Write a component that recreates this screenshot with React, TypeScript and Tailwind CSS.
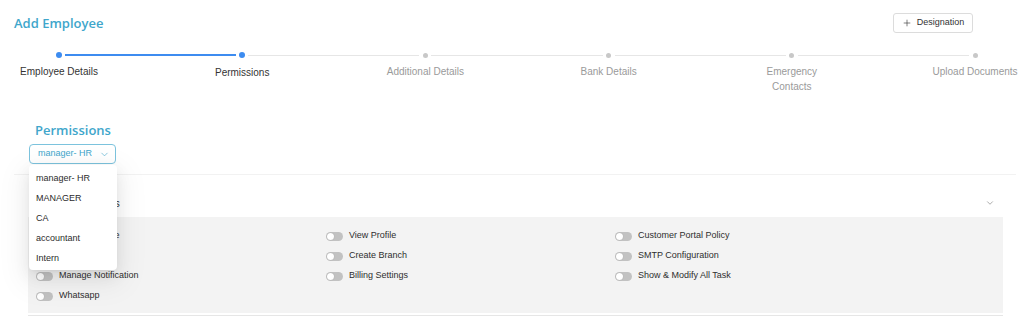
import { ChevronDown, Plus } from 'lucide-react';

const steps = [
  { label: 'Employee Details', done: true },
  { label: 'Permissions', done: true },
  { label: 'Additional Details', done: false },
  { label: 'Bank Details', done: false },
  { label: 'Emergency\nContacts', done: false },
  { label: 'Upload Documents', done: false },
];

const roles = ['manager- HR', 'MANAGER', 'CA', 'accountant', 'Intern'];

// row by row, three columns
const permissions = [
  'Manage Profile',
  'View Profile',
  'Customer Portal Policy',
  'Manage Role',
  'Create Branch',
  'SMTP Configuration',
  'Manage Notification',
  'Billing Settings',
  'Show & Modify All Task',
  'Whatsapp',
];

function Toggle() {
  return (
    <span className="flex h-[9px] w-[17px] shrink-0 items-center rounded-full bg-[#c2c2c2] px-[1px]">
      <span className="h-[7px] w-[7px] rounded-full bg-white shadow-[0_0_1px_rgba(0,0,0,0.25)]" />
    </span>
  );
}

function Stepper() {
  return (
    <div className="mt-[19px] flex items-start pl-[56px] pr-[46px]">
      {steps.map((step, i) => (
        <div key={step.label} className="contents">
          {i > 0 && (
            step.done ? (
              <div className="mx-[3px] mt-[2px] h-[2px] flex-1 bg-[#3d8cf0]" />
            ) : (
              <div className="mx-[3px] mt-[3px] h-px flex-1 bg-[#e6e6e6]" />
            )
          )}
          <div className="flex w-[6px] flex-col items-center">
            <div className="flex h-[6px] w-[6px] items-center justify-center">
              {step.done ? (
                <span className="h-[6px] w-[6px] rounded-full bg-[#3d8cf0]" />
              ) : (
                <span className="h-[5px] w-[5px] rounded-full bg-[#c8c8c8]" />
              )}
            </div>
            <div
              className={`mt-[6px] whitespace-pre text-center text-[10px] leading-[15px] ${
                step.done ? 'text-[#333333]' : 'text-[#9a9a9a]'
              } ${i === 1 ? 'pt-[1px]' : ''}`}
            >
              {step.label}
            </div>
          </div>
        </div>
      ))}
    </div>
  );
}

export default function App() {
  return (
    <div className="min-h-[319px] overflow-hidden bg-white font-['Liberation_Sans',Arial,sans-serif] text-[#333333]">
      <div className="flex items-center justify-between pl-[14px] pr-[51px] pt-[13px]">
        <h1 className="font-['Open_Sans',sans-serif] text-[13px] font-semibold leading-[20px] text-[#40a6cb]">
          Add Employee
        </h1>
        <button className="flex h-[20px] w-[80px] items-center justify-center gap-[5px] rounded-[3px] border border-[#dcdcdc] bg-white text-[9px] text-[#333333]">
          <Plus size={10} strokeWidth={1.5} />
          Designation
        </button>
      </div>

      <Stepper />

      <h2 className="mt-[26px] pl-[35px] font-['Open_Sans',sans-serif] text-[13px] font-semibold leading-[20px] text-[#40a6cb]">
        Permissions
      </h2>

      <div className="relative ml-[29px] mt-[4px] w-[87px]">
        <button className="flex h-[20px] w-[87px] items-center gap-[7px] rounded-[4px] border border-[#7cc3dd] bg-white pl-[8px] text-[9px] text-[#40a6cb]">
          manager- HR
          <ChevronDown size={11} strokeWidth={1.3} />
        </button>
        <div className="absolute left-0 top-[21px] z-10 w-[88px] rounded-[4px] bg-white pb-[1px] pt-[4px] shadow-[0_3px_6px_-4px_rgba(0,0,0,0.12),0_6px_16px_0_rgba(0,0,0,0.08),0_9px_28px_8px_rgba(0,0,0,0.05)]">
          {roles.map((r) => (
            <div key={r} className="flex h-[20px] items-center pl-[7px] text-[9px] text-[#2b2b2b]">
              {r}
            </div>
          ))}
        </div>
      </div>

      <div className="ml-[14px] mr-[8px] mt-[10px] border-t border-[#f2f2f2]">
        <div className="mt-[14px] flex h-[28px] items-center justify-between pl-[24px] pr-[21px]">
          <span className="text-[10px] text-[#333333]">Company Settings</span>
          <ChevronDown size={10} strokeWidth={1.3} className="text-[#666666]" />
        </div>
        <div className="ml-[14px] mr-[13px] grid grid-cols-[290px_289px_1fr] bg-[#f3f3f3] pb-[7px] pl-[8px] pt-[9px]">
          {permissions.map((p) => (
            <div key={p} className="flex h-[20px] items-center gap-[6px]">
              <Toggle />
              <span className="text-[9px] text-[#2e2e2e]">{p}</span>
            </div>
          ))}
        </div>
        <div className="ml-[14px] mr-[13px] mt-[2px] h-px bg-[#e6e6e6]" />
      </div>
    </div>
  );
}
